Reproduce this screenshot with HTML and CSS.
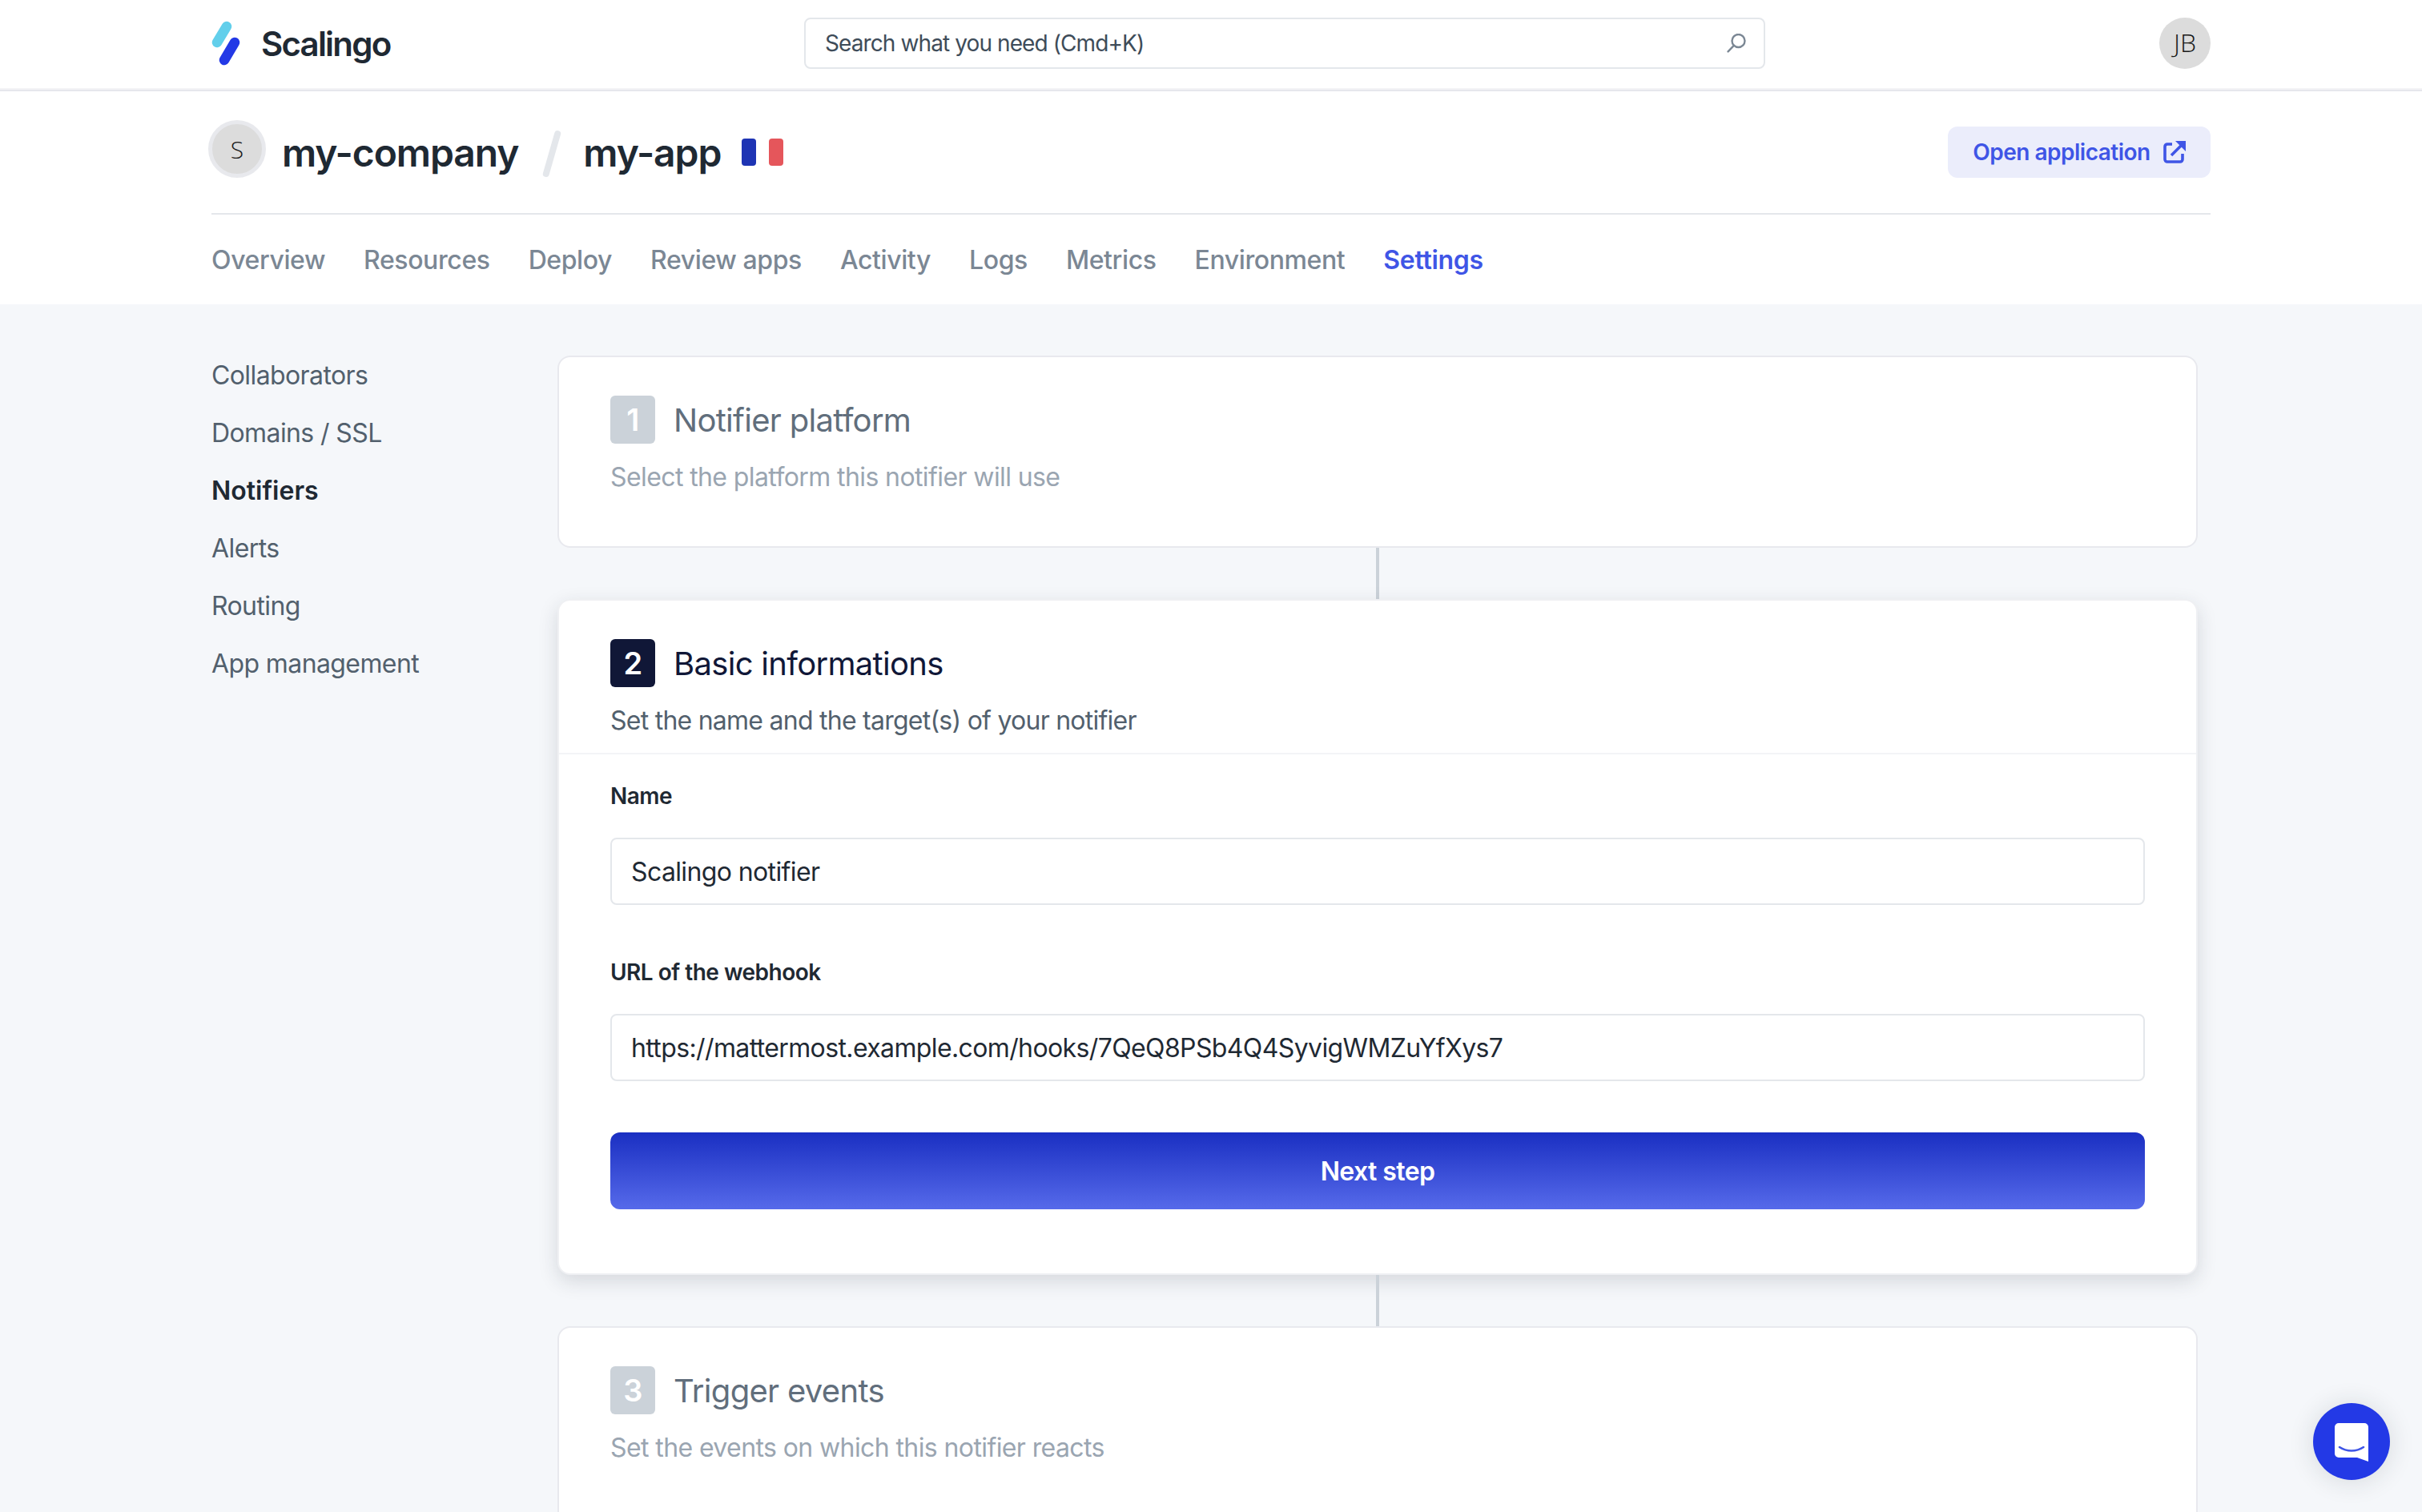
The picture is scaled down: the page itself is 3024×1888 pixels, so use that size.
FILE: index.html
```html
<!DOCTYPE html>
<html>
<head>
    <title>Scalingo - Notifiers</title>
    <link rel="stylesheet" href="styles.css">
</head>
<body>
    <header class="topbar">
        <div class="wrap topbar-inner">
            <a class="logo">
                <svg class="logo-mark" viewBox="0 0 36 56" width="36" height="56">
                    <line x1="19" y1="7" x2="7" y2="27" stroke="#62cfeb" stroke-width="12.5" stroke-linecap="round"/>
                    <line x1="29" y1="27" x2="16" y2="49" stroke="#2339e6" stroke-width="12.5" stroke-linecap="round"/>
                </svg>
                <span class="logo-text">Scalingo</span>
            </a>
            <div class="search">
                <span>Search what you need (Cmd+K)</span>
                <svg viewBox="0 0 24 24" width="24" height="24" fill="none" stroke="#7b8794" stroke-width="2.4" stroke-linecap="round">
                    <circle cx="14.5" cy="9" r="8"/>
                    <line x1="8.8" y1="14.8" x2="1.6" y2="22.4"/>
                </svg>
            </div>
            <div class="avatar">JB</div>
        </div>
    </header>

    <section class="apphead">
        <div class="wrap">
            <div class="apptitle">
                <div class="crumbs">
                    <div class="org-avatar">S</div>
                    <span class="crumb">my-company</span>
                    <span class="crumb-sep"></span>
                    <span class="crumb">my-app</span>
                    <svg class="flag" viewBox="0 0 52 34" width="52" height="34">
                        <rect x="0" y="0" width="18" height="34" rx="4" fill="#1e34b4"/>
                        <rect x="34" y="0" width="18" height="34" rx="4" fill="#e5565b"/>
                    </svg>
                </div>
                <a class="open-btn">
                    Open application
                    <svg viewBox="0 0 28 28" width="28" height="28" fill="none" stroke="#3f55e6" stroke-width="3.6">
                        <path d="M11 4H5a3 3 0 0 0-3 3v16a3 3 0 0 0 3 3h16a3 3 0 0 0 3-3v-7"/>
                        <path d="M10 18L23 5"/>
                        <path d="M15 0h13v13z" fill="#3f55e6" stroke="none"/>
                    </svg>
                </a>
            </div>
            <nav class="tabs">
                <a>Overview</a>
                <a>Resources</a>
                <a>Deploy</a>
                <a>Review apps</a>
                <a>Activity</a>
                <a>Logs</a>
                <a>Metrics</a>
                <a>Environment</a>
                <a class="active">Settings</a>
            </nav>
        </div>
    </section>

    <main class="wrap layout">
        <aside class="sidenav">
            <a>Collaborators</a>
            <a>Domains / SSL</a>
            <a class="active">Notifiers</a>
            <a>Alerts</a>
            <a>Routing</a>
            <a>App management</a>
        </aside>

        <div class="steps">
            <section class="card card-done">
                <div class="card-head">
                    <div class="step-title">
                        <span class="step-num">1</span>
                        <h2>Notifier platform</h2>
                    </div>
                    <p>Select the platform this notifier will use</p>
                </div>
            </section>
            <div class="connector"></div>

            <section class="card card-current">
                <div class="card-head">
                    <div class="step-title">
                        <span class="step-num">2</span>
                        <h2>Basic informations</h2>
                    </div>
                    <p>Set the name and the target(s) of your notifier</p>
                </div>
                <form class="card-body">
                    <label for="name">Name</label>
                    <input id="name" type="text" value="Scalingo notifier">
                    <label for="url">URL of the webhook</label>
                    <input id="url" type="text" value="https://mattermost.example.com/hooks/7QeQ8PSb4Q4SyvigWMZuYfXys7">
                    <button type="button">Next step</button>
                </form>
            </section>
            <div class="connector"></div>

            <section class="card card-done">
                <div class="card-head">
                    <div class="step-title">
                        <span class="step-num">3</span>
                        <h2>Trigger events</h2>
                    </div>
                    <p>Set the events on which this notifier reacts</p>
                </div>
            </section>
        </div>
    </main>

    <a class="chat">
        <svg viewBox="0 0 42 48" width="42" height="48">
            <path d="M5 0h32a5 5 0 0 1 5 5v43l-14-5H5a5 5 0 0 1-5-5V5a5 5 0 0 1 5-5z" fill="#fff"/>
            <path d="M6 30c9 6 21 6 30 0" fill="none" stroke="#3f55e6" stroke-width="2.6" stroke-linecap="round"/>
        </svg>
    </a>
</body>
</html>
```

FILE: styles.css
```css
/* Global styles */
html, body {
    height: 100%;
}

body {
    font-family: Inter, 'Liberation Sans', sans-serif;
    background-color: #f5f7fa;
    color: #1f2933;
    margin: 0;
    overflow: hidden;
    font-size: 32px;
    letter-spacing: -0.6px;
}

.wrap {
    width: 2496px;
    margin: 0 auto;
}

/* Top bar */
.topbar {
    height: 112px;
    background-color: #fff;
    border-bottom: 2px solid #e6e7ec;
    box-shadow: 0 -2px 0 #f3f3f6 inset;
}

.topbar-inner {
    display: flex;
    align-items: center;
    height: 108px;
}

.logo {
    display: flex;
    align-items: center;
    gap: 26px;
    width: 740px;
}

.logo-text {
    font-size: 42px;
    font-weight: 600;
    letter-spacing: -1.8px;
}

.search {
    width: 1200px;
    height: 64px;
    box-sizing: border-box;
    border: 2px solid #e4e7eb;
    border-radius: 8px;
    padding: 0 22px 0 24px;
    display: flex;
    align-items: center;
    justify-content: space-between;
    font-size: 28px;
    letter-spacing: -0.9px;
    color: #3e4c59;
}

.avatar {
    width: 64px;
    height: 64px;
    box-sizing: border-box;
    padding-bottom: 4px;
    border-radius: 50%;
    background-color: #dcdcdc;
    margin-left: auto;
    display: flex;
    align-items: center;
    justify-content: center;
    font-family: 'Open Sans', sans-serif;
    font-size: 32px;
    font-weight: 300;
    letter-spacing: 0;
    color: #1a1a1a;
}

/* App header */
.apphead {
    background-color: #fff;
    height: 266px;
}

.apptitle {
    height: 154px;
    box-sizing: border-box;
    border-bottom: 2px solid #e4e7eb;
    display: flex;
    justify-content: space-between;
    align-items: center;
}

.crumbs {
    display: flex;
    align-items: center;
}

.org-avatar {
    width: 72px;
    height: 72px;
    box-sizing: border-box;
    margin: 0 20px 8px -4px;
    border: 5px solid #e8e9ed;
    border-radius: 50%;
    background-color: #dcdcdc;
    display: flex;
    align-items: center;
    justify-content: center;
    font-family: 'Open Sans', sans-serif;
    font-size: 30px;
    font-weight: 300;
    letter-spacing: 0;
    color: #1a1a1a;
}

.crumb {
    font-size: 48px;
    font-weight: 600;
    letter-spacing: -1.1px;
}

.crumb-sep {
    width: 8px;
    height: 60px;
    border-radius: 4px;
    background-color: #e4e7eb;
    transform: rotate(16deg);
    margin: 4px 35px 0 38px;
}

.flag {
    margin-left: 26px;
}

.open-btn {
    width: 328px;
    height: 64px;
    box-sizing: border-box;
    border-radius: 12px;
    background-color: #ebedfb;
    color: #3f55e6;
    font-size: 28px;
    font-weight: 600;
    letter-spacing: -0.5px;
    display: flex;
    align-items: center;
    justify-content: center;
    gap: 16px;
}

.tabs {
    display: flex;
    gap: 48px;
    height: 112px;
    align-items: center;
    font-weight: 500;
    letter-spacing: -0.4px;
    color: #7b8794;
}

.tabs .active {
    color: #3f55e6;
    font-weight: 600;
    letter-spacing: -0.3px;
}

/* Page body */
.layout {
    display: grid;
    grid-template-columns: 432px 2048px;
    padding-top: 64px;
}

.sidenav {
    display: flex;
    flex-direction: column;
    gap: 32px;
    color: #52606d;
    padding-top: 5px;
}

.sidenav a {
    line-height: 40px;
}

.sidenav .active {
    font-weight: 600;
    letter-spacing: 0;
    color: #1f2933;
}

/* Step cards */
.card {
    background-color: #fff;
    border: 2px solid #e8e9ee;
    border-radius: 16px;
}

.card-head {
    padding: 48px 64px 0;
}

.step-title {
    display: flex;
    align-items: center;
    gap: 23px;
}

.step-num {
    width: 56px;
    height: 60px;
    border-radius: 6px;
    display: flex;
    align-items: center;
    justify-content: center;
    font-size: 38px;
    font-weight: 600;
    color: #fff;
}

.step-title h2 {
    margin: 0;
    padding-top: 2px;
    font-size: 40px;
    font-weight: 400;
    line-height: 58px;
    letter-spacing: -0.7px;
}

.card-head p {
    margin: 22px 0 0;
    line-height: 40px;
}

.card-done {
    height: 240px;
    box-sizing: border-box;
}

.card-done:last-child {
    height: 400px;
}

.card-done .step-num {
    background-color: #cbd2d9;
}

.card-done h2 {
    color: #616e7c;
}

.card-done p {
    color: #9aa5b1;
}

.card-current {
    height: 844px;
    box-sizing: border-box;
    border-color: #eff0f3;
    box-shadow: 0 8px 24px rgba(31, 41, 51, 0.15);
}

.card-current .step-num {
    background-color: #101737;
}

.card-current h2 {
    color: #101737;
}

.card-current p {
    color: #52606d;
    letter-spacing: -0.75px;
}

.card-current .card-head {
    padding-bottom: 20px;
    border-bottom: 2px solid #f3f4f7;
}

.connector {
    width: 4px;
    height: 64px;
    background-color: #cbd2d9;
    margin: 0 auto;
}

/* Form */
.card-body {
    display: flex;
    flex-direction: column;
    padding: 0 64px;
}

.card-body label {
    font-size: 28px;
    font-weight: 600;
    letter-spacing: -0.5px;
    line-height: 40px;
    margin: 32px 0 32px;
    color: #1f2933;
}

.card-body input {
    height: 84px;
    box-sizing: border-box;
    border: 2px solid #e4e7eb;
    border-radius: 8px;
    padding: 0 24px;
    font-family: inherit;
    font-size: 32px;
    letter-spacing: -0.62px;
    color: #1f2933;
    margin-bottom: 32px;
}

.card-body button {
    height: 96px;
    margin-top: 32px;
    border: none;
    border-radius: 12px;
    background: linear-gradient(180deg, #1a2fc2 0%, #566aea 100%);
    color: #fff;
    font-family: inherit;
    font-size: 32px;
    font-weight: 600;
    letter-spacing: -0.6px;
}

/* Chat launcher */
.chat {
    position: fixed;
    left: 2888px;
    top: 1752px;
    width: 96px;
    height: 96px;
    border-radius: 50%;
    background-color: #2339e6;
    box-shadow: 0 2px 32px rgba(31, 41, 51, 0.14);
    display: flex;
    align-items: center;
    justify-content: center;
}

.chat svg {
    margin-top: 2px;
}
```
